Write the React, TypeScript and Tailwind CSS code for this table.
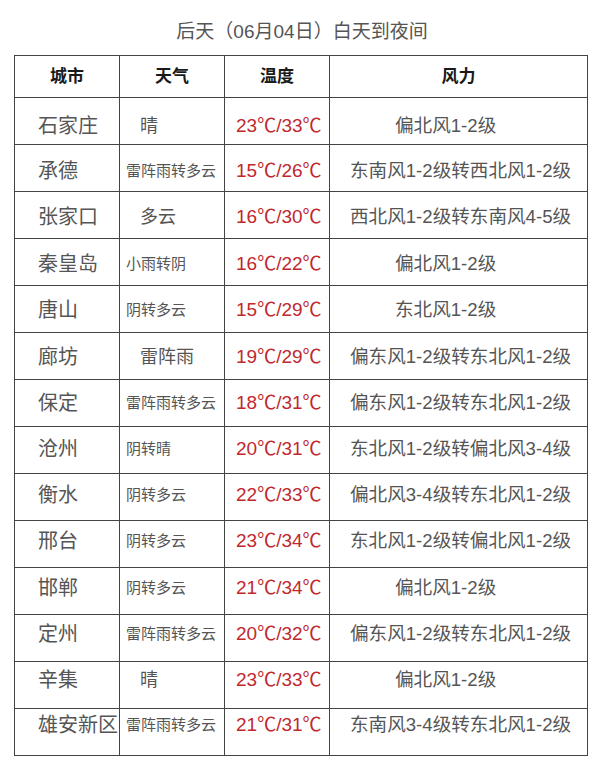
import React from "react";

type Row = {
  city: string;
  weather: string;
  wideWeather: boolean;
  temp: string;
  wind: string;
  shortWind: boolean;
  pad: string;
};

// text drifts upward row by row in the source picture, so each row gets its own top padding
const rows: Row[] = [
  { city: "石家庄", weather: "晴", wideWeather: false, temp: "23℃/33℃", wind: "偏北风1-2级", shortWind: true, pad: "pt-[14px]" },
  { city: "承德", weather: "雷阵雨转多云", wideWeather: true, temp: "15℃/26℃", wind: "东南风1-2级转西北风1-2级", shortWind: false, pad: "pt-[12px]" },
  { city: "张家口", weather: "多云", wideWeather: false, temp: "16℃/30℃", wind: "西北风1-2级转东南风4-5级", shortWind: false, pad: "pt-[11px]" },
  { city: "秦皇岛", weather: "小雨转阴", wideWeather: true, temp: "16℃/22℃", wind: "偏北风1-2级", shortWind: true, pad: "pt-[11px]" },
  { city: "唐山", weather: "阴转多云", wideWeather: true, temp: "15℃/29℃", wind: "东北风1-2级", shortWind: true, pad: "pt-[10px]" },
  { city: "廊坊", weather: "雷阵雨", wideWeather: false, temp: "19℃/29℃", wind: "偏东风1-2级转东北风1-2级", shortWind: false, pad: "pt-[10px]" },
  { city: "保定", weather: "雷阵雨转多云", wideWeather: true, temp: "18℃/31℃", wind: "偏东风1-2级转东北风1-2级", shortWind: false, pad: "pt-[9px]" },
  { city: "沧州", weather: "阴转晴", wideWeather: true, temp: "20℃/31℃", wind: "东北风1-2级转偏北风3-4级", shortWind: false, pad: "pt-[8px]" },
  { city: "衡水", weather: "阴转多云", wideWeather: true, temp: "22℃/33℃", wind: "偏北风3-4级转东北风1-2级", shortWind: false, pad: "pt-[7px]" },
  { city: "邢台", weather: "阴转多云", wideWeather: true, temp: "23℃/34℃", wind: "东北风1-2级转偏北风1-2级", shortWind: false, pad: "pt-[6px]" },
  { city: "邯郸", weather: "阴转多云", wideWeather: true, temp: "21℃/34℃", wind: "偏北风1-2级", shortWind: true, pad: "pt-[6px]" },
  { city: "定州", weather: "雷阵雨转多云", wideWeather: true, temp: "20℃/32℃", wind: "偏东风1-2级转东北风1-2级", shortWind: false, pad: "pt-[5px]" },
  { city: "辛集", weather: "晴", wideWeather: false, temp: "23℃/33℃", wind: "偏北风1-2级", shortWind: true, pad: "pt-[4px]" },
  { city: "雄安新区", weather: "雷阵雨转多云", wideWeather: true, temp: "21℃/31℃", wind: "东南风3-4级转东北风1-2级", shortWind: false, pad: "pt-[2px]" },
];

const font = { fontFamily: '"Liberation Sans", "Noto Sans CJK SC", sans-serif' };

export default function App() {
  return (
    <div className="w-[600px] h-[775px] bg-white pt-[19px]" style={font}>
      <div className="text-center text-[19px] leading-[26px] text-[#555] pl-[4px]">
        后天（06月04日）白天到夜间
      </div>

      <table className="ml-[14px] mt-[10px] w-[574px] table-fixed border-collapse">
        <colgroup>
          <col className="w-[105px]" />
          <col className="w-[105px]" />
          <col className="w-[105px]" />
          <col />
        </colgroup>
        <thead>
          <tr className="h-[42px]">
            {["城市", "天气", "温度", "风力"].map((h) => (
              <th
                key={h}
                className="border border-[#444] text-center align-middle text-[17px] font-bold text-[#1a1a1a]"
              >
                {h}
              </th>
            ))}
          </tr>
        </thead>
        <tbody>
          {rows.map((r) => (
            <tr key={r.city} className="h-[47px]">
              <td className={`border border-[#444] align-top pl-[23px] text-[20px] leading-[28px] text-[#555] ${r.pad}`}>
                {r.city}
              </td>
              <td
                className={`border border-[#444] align-top leading-[28px] text-[#555] whitespace-nowrap ${r.pad} ${
                  r.wideWeather ? "pl-[6px] text-[15px]" : "pl-[20px] text-[18px]"
                }`}
              >
                {r.weather}
              </td>
              <td className={`border border-[#444] align-top pl-[11px] text-[19px] leading-[28px] text-[#c0282e] whitespace-nowrap ${r.pad}`}>
                {r.temp}
              </td>
              <td
                className={`border border-[#444] align-top text-[18.6px] leading-[28px] text-[#555] whitespace-nowrap ${r.pad} ${
                  r.shortWind ? "pl-[65px]" : "pl-[20px]"
                }`}
              >
                {r.wind}
              </td>
            </tr>
          ))}
        </tbody>
      </table>
    </div>
  );
}
